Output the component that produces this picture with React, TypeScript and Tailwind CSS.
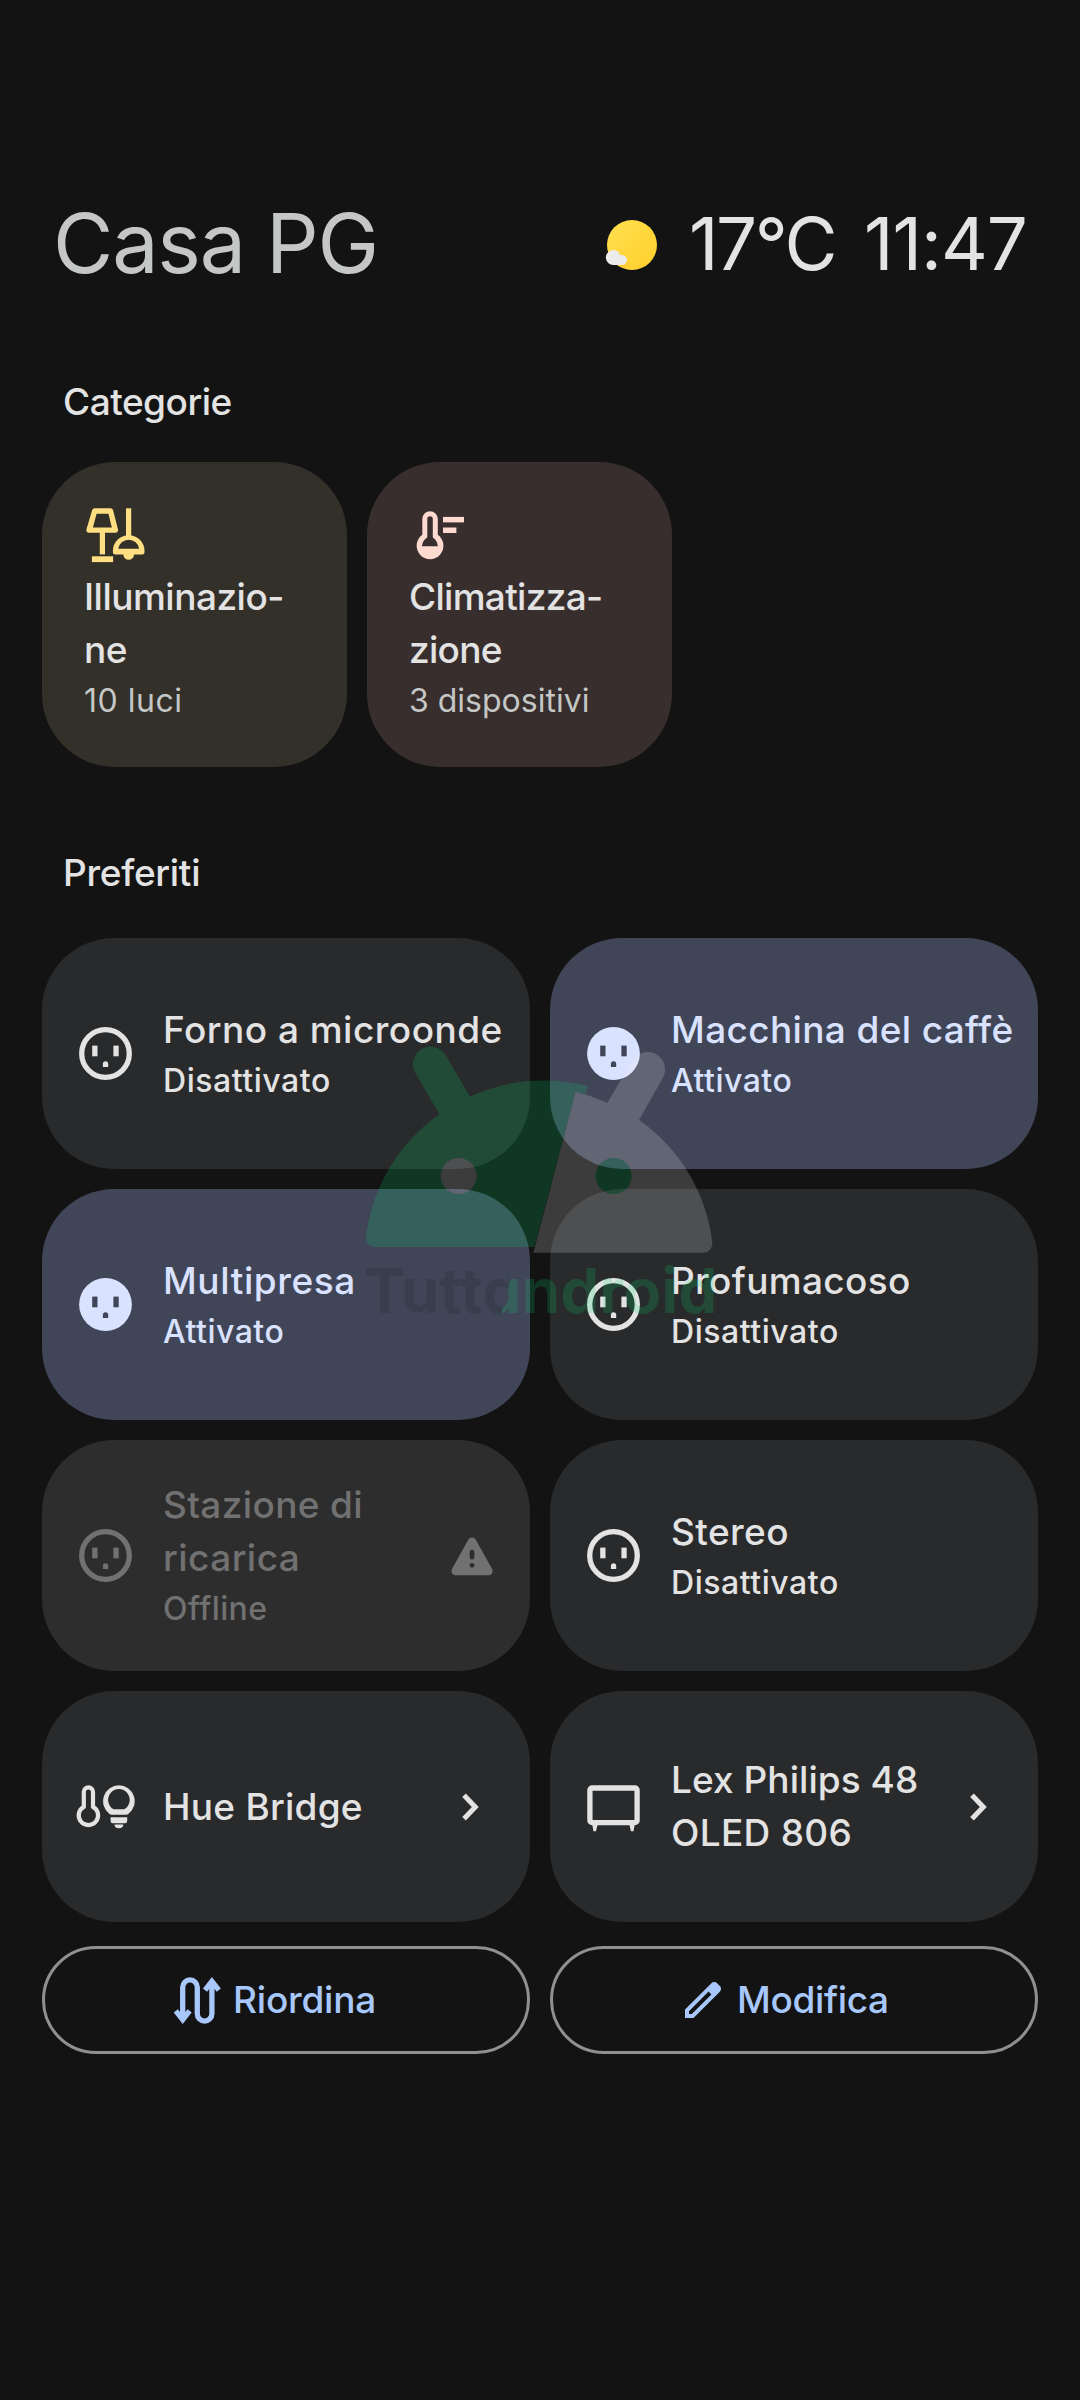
import type { ReactNode } from 'react';

type Tile = {
  lines: [string, string][];
  status?: [string, string];
  icon: ReactNode;
  state?: 'on' | 'off' | 'offline';
  trailing?: ReactNode;
};

function SocketIcon({ filled = false }: { filled?: boolean }) {
  const holes = (
    <>
      <rect x="18.2" y="23.6" width="5.3" height="10.7" />
      <rect x="39.4" y="23.6" width="5.3" height="10.7" />
      <path d="M28.9 45v-3a2.65 2.65 0 0 1 5.3 0v3z" />
    </>
  );
  return (
    <svg viewBox="0 0 63 63" className="size-[63px] shrink-0">
      {filled ? (
        <>
          <circle cx="31.5" cy="31.5" r="26.4" fill="currentColor" />
          <g fill="#414558">{holes}</g>
        </>
      ) : (
        <>
          <circle cx="31.5" cy="31.5" r="23.8" fill="none" stroke="currentColor" strokeWidth="5.3" />
          <g fill="currentColor">{holes}</g>
        </>
      )}
    </svg>
  );
}

function LampsIcon() {
  return (
    <svg viewBox="0 0 63 63" className="size-[63px]" fill="#ffdf81">
      <path
        fillRule="evenodd"
        d="M10.6 4.3h16a2.6 2.6 0 0 1 2.5 2L34 25.5a2.6 2.6 0 0 1-2.5 3.3H5A2.6 2.6 0 0 1 2.4 25.5L8.1 6.3a2.6 2.6 0 0 1 2.5-2zM12.6 9.8 8.9 23.6h18.9L24.5 9.8z"
      />
      <rect x="15.8" y="28" width="5.2" height="22.4" />
      <rect x="7.9" y="52.3" width="21.2" height="5.8" />
      <rect x="42" y="4.3" width="5.2" height="28" />
      <path
        fillRule="evenodd"
        d="M28.9 47a15.8 15.8 0 0 1 31.6 0v1.2a2.3 2.3 0 0 1-2.3 2.3H50a5.3 5.3 0 0 1-10.6 0h-8.2a2.3 2.3 0 0 1-2.3-2.3zM34.2 44.8h21a10.6 10.6 0 0 0-21 0z"
      />
    </svg>
  );
}

function ClimateIcon() {
  return (
    <svg viewBox="0 0 63 63" className="ml-px size-[63px]" fill="#ffdad1">
      <path
        fillRule="evenodd"
        d="M12.3 15a7.75 7.75 0 0 1 15.5 0v15.8a13.4 13.4 0 1 1-15.5 0zM17.3 15v18.6q-4.6 2.5-5.4 8.6h16q-.8-6.1-5.1-8.6V15a2.75 2.75 0 0 0-5.5 0z"
      />
      <rect x="33" y="12.9" width="21" height="5.5" />
      <rect x="33" y="23.5" width="13.4" height="5.5" />
    </svg>
  );
}

function BridgeIcon() {
  return (
    <svg viewBox="0 0 63 63" className="size-[63px] shrink-0" fill="currentColor">
      <path
        fill="none"
        stroke="currentColor"
        strokeWidth="4.2"
        d="M9.8 17a4.6 4.6 0 0 1 9.2 0v14.8a9.7 9.7 0 1 1-9.2 0z"
      />
      <path
        fillRule="evenodd"
        d="M44.9 10.3a15.9 15.9 0 0 1 9.7 28.4q-1 1-2.6 1H37.8q-1.6 0-2.6-1a15.9 15.9 0 0 1 9.7-28.4zM39.6 34.3h10.6a10.8 10.8 0 1 0-10.6 0z"
      />
      <path d="M36.6 42.2h16.6v3.8a2.3 2.3 0 0 1-2.3 2.3h-12a2.3 2.3 0 0 1-2.3-2.3z" />
      <path d="M40.5 49.5h8.8a4.4 3.8 0 0 1-8.8 0z" />
    </svg>
  );
}

function TvIcon() {
  return (
    <svg viewBox="0 0 63 63" className="size-[63px] shrink-0" fill="currentColor">
      <rect x="7.9" y="13" width="47.2" height="34.6" rx="2.2" fill="none" stroke="currentColor" strokeWidth="5.3" />
      <path d="M10.3 49.5h5.3l-1.6 6.7h-2.6zM47.4 49.5h5.3l-1.2 6.7h-2.6z" />
    </svg>
  );
}

function WarningIcon() {
  return (
    <svg viewBox="0 0 42 42" className="mr-[37px] size-[42px] shrink-0" fill="currentColor">
      <path
        fillRule="evenodd"
        d="M17.4 4.5a4.2 4.2 0 0 1 7.3 0l16.4 29.4a4.2 4.2 0 0 1-3.7 6.3H4.7A4.2 4.2 0 0 1 1 33.9zM18.7 17.2v5a2.35 2.35 0 0 0 4.7 0v-5a2.35 2.35 0 0 0-4.7 0zM21.05 27.9a2.4 2.4 0 1 0 0 4.8a2.4 2.4 0 0 0 0-4.8z"
      />
    </svg>
  );
}

function Chevron() {
  return (
    <svg viewBox="0 0 18 30" className="mr-[51px] h-[30px] w-[18px] shrink-0">
      <path d="M3 3.2 14.3 15 3 26.8" fill="none" stroke="currentColor" strokeWidth="5" />
    </svg>
  );
}

function ReorderIcon() {
  return (
    <svg viewBox="0 0 49 49" className="size-[49px]" fill="none" stroke="currentColor" strokeWidth="5.3">
      <path d="M9.7 43V11.2a7.3 7.3 0 0 1 14.6 0v26.6a7.3 7.3 0 0 0 14.6 0V6" />
      <path d="m2.8 34.8 6.9 8.8 6.9-8.8M32 14.2l6.9-8.8 6.9 8.8" />
      <path d="M4 36.5 9.7 44l5.7-7.5zM33.2 12.5 38.9 5l5.7 7.5z" fill="currentColor" stroke="none" />
    </svg>
  );
}

function PencilIcon() {
  return (
    <svg viewBox="0 0 24 24" className="size-[48px]" fill="currentColor">
      <path d="M5 19h1.425L16.2 9.225 14.775 7.8 5 17.575Zm-2 2v-4.25L16.2 3.575q.3-.275.662-.425Q17.225 3 17.625 3t.775.15q.375.15.65.45L20.425 5q.3.275.438.65.137.375.137.75 0 .4-.137.763-.138.362-.438.662L7.25 21Z" />
    </svg>
  );
}

function SunIcon() {
  return (
    <svg viewBox="0 0 60 60" className="mr-[27px] mt-[22px] size-[60px]">
      <defs>
        <linearGradient id="sun" x1="0" y1="0" x2="1" y2="1">
          <stop offset="0" stopColor="#ffe04f" />
          <stop offset="1" stopColor="#ffcf2c" />
        </linearGradient>
        <linearGradient id="shade" x1="0" y1="0" x2="1" y2="0.6">
          <stop offset="0" stopColor="#f5a623" stopOpacity="0.7" />
          <stop offset="1" stopColor="#f9b826" stopOpacity="0" />
        </linearGradient>
      </defs>
      <circle cx="30" cy="30" r="25" fill="url(#sun)" />
      <path d="M20 41 34 53a25 25 0 0 1-18-3z" fill="url(#shade)" />
      <path d="M11.5 49.9a7.4 7.4 0 1 1 6.8-9.7 5 5 0 1 1 2 9.7z" fill="#ececec" />
    </svg>
  );
}

const tiles: Tile[] = [
  {
    lines: [['Forno a microonde', 'tracking-[0.48px]']],
    status: ['Disattivato', 'tracking-[0.55px]'],
    icon: <SocketIcon />,
  },
  {
    lines: [['Macchina del caffè', 'tracking-[0.36px]']],
    status: ['Attivato', 'tracking-[0.5px]'],
    icon: <SocketIcon filled />,
    state: 'on',
  },
  {
    lines: [['Multipresa', 'tracking-[0.6px]']],
    status: ['Attivato', 'tracking-[0.5px]'],
    icon: <SocketIcon filled />,
    state: 'on',
  },
  {
    lines: [['Profumacoso', 'tracking-[0.35px]']],
    status: ['Disattivato', 'tracking-[0.55px]'],
    icon: <SocketIcon />,
  },
  {
    lines: [
      ['Stazione di', 'tracking-[0.35px]'],
      ['ricarica', 'tracking-[0.45px]'],
    ],
    status: ['Offline', 'tracking-[0.39px]'],
    icon: <SocketIcon />,
    state: 'offline',
    trailing: <WarningIcon />,
  },
  {
    lines: [['Stereo', 'tracking-[0.4px]']],
    status: ['Disattivato', 'tracking-[0.55px]'],
    icon: <SocketIcon />,
  },
  { lines: [['Hue Bridge', 'tracking-[0.25px]']], icon: <BridgeIcon />, trailing: <Chevron /> },
  {
    lines: [
      ['Lex Philips 48', 'tracking-[0.05px]'],
      ['OLED 806', 'tracking-[0.3px]'],
    ],
    icon: <TvIcon />,
    trailing: <Chevron />,
  },
];

const tileColors = {
  on: 'bg-[#414558] text-[#d9e2ff]',
  off: 'bg-[#292a2c] text-[#e3e3e3]',
  offline: 'bg-[#2d2d2d] text-[#717171]',
};

function DeviceTile({ tile }: { tile: Tile }) {
  return (
    <div className={`flex h-[231px] items-center rounded-[72px] pl-8 ${tileColors[tile.state ?? 'off']}`}>
      {tile.icon}
      <div
        className={`ml-[26px] min-w-0 flex-1 whitespace-nowrap font-medium ${tile.status ? 'pt-px' : 'pb-px'}`}
      >
        {tile.lines.map(([text, tracking]) => (
          <p key={text} className={`text-[37px] leading-[53px] ${tracking}`}>
            {text}
          </p>
        ))}
        {tile.status && <p className={`text-[32px] leading-[50px] ${tile.status[1]}`}>{tile.status[0]}</p>}
      </div>
      {tile.trailing}
    </div>
  );
}

type CategoryProps = { color: string; icon: ReactNode; lines: string[]; tracking: string; detail: ReactNode };

function CategoryCard({ color, icon, lines, tracking, detail }: CategoryProps) {
  return (
    <div className={`size-[305px] rounded-[73px] pl-[42px] pt-[42px] ${color}`}>
      {icon}
      <div className={`mt-[3px] text-[37px] font-medium leading-[53px] text-[#e3e3e3] ${tracking}`}>
        {lines.map((line) => (
          <p key={line}>{line}</p>
        ))}
      </div>
      <p className="text-[32px] leading-[50px] text-[#c4c7c5]">{detail}</p>
    </div>
  );
}

function Watermark() {
  return (
    <div className="pointer-events-none absolute left-[340px] top-[1020px] h-[320px] w-[400px]">
      <svg viewBox="0 0 1200 960" className="absolute inset-0 size-full">
        <g fill="#00db6c" opacity="0.18">
          <path
            fillRule="evenodd"
            d="M226 159A52 52 0 0 1 317 106L390 230A525 525 0 0 1 743 198L737 223L707 215L583 681H104A27 27 0 0 1 78 650A525 525 0 0 1 298 283ZM302 468a54 54 0 1 0 108 0a54 54 0 1 0-108 0z"
          />
          <circle cx="821" cy="468" r="54" />
        </g>
        <g fill="#f0f0f0" opacity="0.19">
          <path
            fillRule="evenodd"
            d="M707 215A525 525 0 0 1 802 248L877 122A52 52 0 0 1 968 175L897 300A525 525 0 0 1 1117 668A27 27 0 0 1 1091 698H580ZM767 468a54 54 0 1 0 108 0a54 54 0 1 0-108 0z"
          />
          <circle cx="356" cy="468" r="54" />
        </g>
      </svg>
      <p className="absolute left-[24px] top-[235px] whitespace-nowrap bg-[linear-gradient(105deg,#1a2420_41%,#00db6c_41%)] bg-clip-text text-[61.6px] font-bold leading-[72px] tracking-[0.33px] text-transparent opacity-[0.18] [font-feature-settings:'cv11']">
        Tuttandroid
      </p>
    </div>
  );
}

export default function App() {
  return (
    <main className="relative h-[2400px] w-[1080px] overflow-hidden bg-[#131313] px-[42px] pt-[193px] font-['Inter',sans-serif] text-[#e3e3e3]">
      <header className="-mr-0.5 flex h-[100px] pl-[11px] leading-[100px]">
        <h1 className="flex-1 whitespace-nowrap text-[82.6px] tracking-[-1.2px] text-[#c4c7c5] [word-spacing:-1px]">
          Casa PG
        </h1>
        <SunIcon />
        <span className="w-[175px] pt-px text-[72.6px] tracking-[-2.45px]">17°C</span>
        <span className="w-[176px] pt-px text-[72.6px] tracking-[-1.03px]">11:47</span>
      </header>

      <h2 className="mt-[82px] pl-[21px] text-[37px] font-medium leading-[53px] tracking-[-0.5px]">Categorie</h2>
      <section className="mt-[34px] flex gap-5">
        <CategoryCard
          color="bg-[#33302a]"
          icon={<LampsIcon />}
          lines={['Illuminazio-', 'ne']}
          tracking="tracking-[-0.5px]"
          detail={<span className="tracking-[0.5px]">10 luci</span>}
        />
        <CategoryCard
          color="bg-[#382e2d]"
          icon={<ClimateIcon />}
          lines={['Climatizza-', 'zione']}
          tracking="tracking-[-0.7px]"
          detail="3 dispositivi"
        />
      </section>

      <h2 className="mt-[79px] pl-[21px] text-[37px] font-medium leading-[53px] tracking-[-0.3px]">Preferiti</h2>
      <section className="mt-[39px] grid grid-cols-2 gap-5">
        {tiles.map((tile, i) => (
          <DeviceTile key={i} tile={tile} />
        ))}
      </section>

      <footer className="mt-6 grid grid-cols-2 gap-5 text-[37px] font-medium text-[#a8c7fa]">
        <button className="flex h-[108px] items-center rounded-[54px] border-[3px] border-[#8e918f] pl-[128px]">
          <ReorderIcon />
          <span className="ml-[11px] tracking-[-0.2px]">Riordina</span>
        </button>
        <button className="flex h-[108px] items-center rounded-[54px] border-[3px] border-[#8e918f] pl-[126px]">
          <PencilIcon />
          <span className="ml-[10px] tracking-[-0.35px]">Modifica</span>
        </button>
      </footer>

      <Watermark />
    </main>
  );
}
